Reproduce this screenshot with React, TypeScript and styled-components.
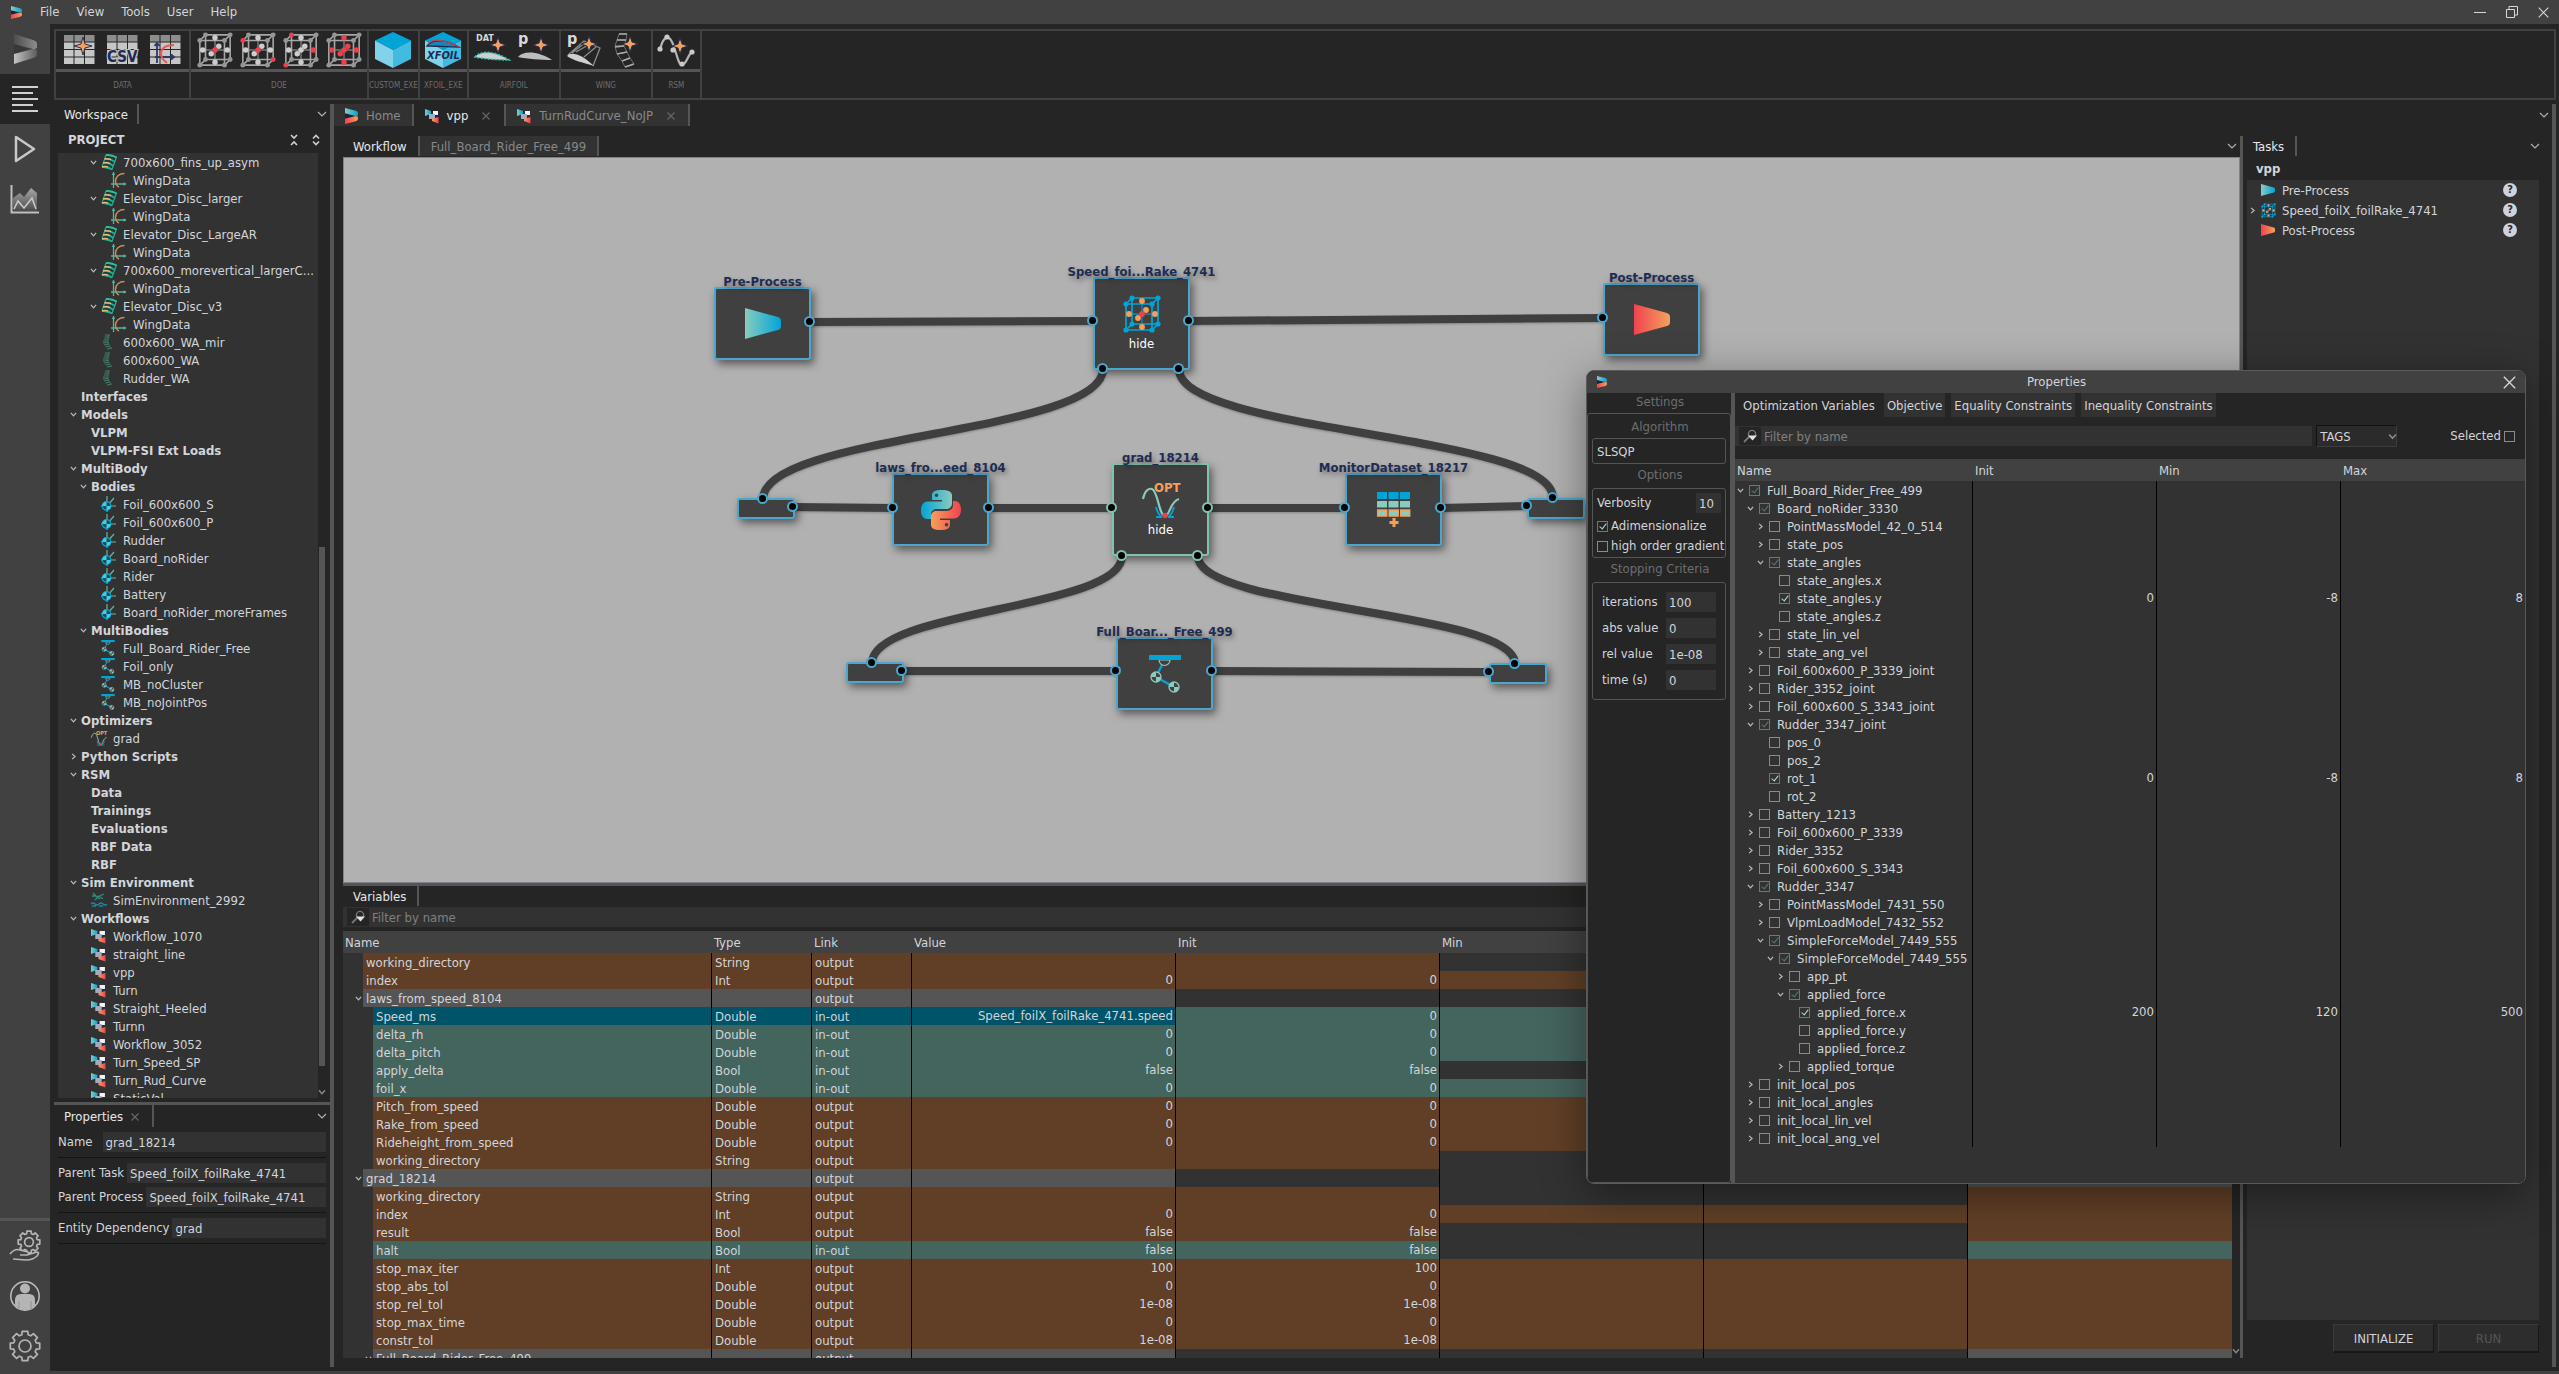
import React from "react";
import styled, { createGlobalStyle, css } from "styled-components";

/* ------------------------------------------------------------------ theme */

const c = {
  bg: "#252525",
  panel: "#323232",
  bar: "#414141",
  line: "#555555",
  text: "#d2d5da",
  dim: "#87898c",
  faint: "#6e6e6e",
  teal: "#44645e",
  brown: "#603f26",
  blue: "#005469",
  cyan: "#00a5d8",
  mint: "#8bcbbd",
  red: "#f04350",
  orange: "#f5a05a",
  navy: "#1e2c54",
};

const GlobalStyle = createGlobalStyle`
  *, *::before, *::after { box-sizing: border-box; }
  body { margin: 0; background: ${c.bg}; overflow: hidden; }
  body, button, input, select, table {
    font-family: "DejaVu Sans Condensed", "Noto Sans", sans-serif;
    font-size: 13px;
    line-height: 18px;
    color: ${c.text};
  }
  button { background: none; border: 0; padding: 0; }
  h1, h2, ul { margin: 0; padding: 0; list-style: none; font-size: 13px; }
  svg { display: block; flex: none; overflow: visible; }
`;

/* ------------------------------------------------------------------ icons */

const DefsSvg = styled.svg`
  position: absolute;
`;

const Defs = () => (
  <DefsSvg width="0" height="0" aria-hidden="true">
    <defs>
      <linearGradient id="gCool"><stop offset="0" stopColor={c.mint} /><stop offset="1" stopColor={c.cyan} /></linearGradient>
      <linearGradient id="gWarm"><stop offset="0" stopColor={c.red} /><stop offset="1" stopColor={c.orange} /></linearGradient>
      <linearGradient id="gCoolR"><stop offset="0" stopColor={c.cyan} /><stop offset="1" stopColor={c.mint} /></linearGradient>
      <linearGradient id="gWarmR"><stop offset="0" stopColor={c.orange} /><stop offset="1" stopColor={c.red} /></linearGradient>
      <linearGradient id="gGray"><stop offset="0" stopColor="#4d4d4d" /><stop offset="1" stopColor="#8d8d8d" /></linearGradient>
      <linearGradient id="gGrayR"><stop offset="0" stopColor="#c4c4c4" /><stop offset="1" stopColor="#5c5c5c" /></linearGradient>
      <linearGradient id="gArea" x2="0" y2="1"><stop offset="0" stopColor="#a8a8a8" /><stop offset="1" stopColor="#4a4a4a" /></linearGradient>
    </defs>
  </DefsSvg>
);

const Logo = ({ w = 12, h = 14 }: { w?: number; h?: number }) => (
  <svg width={w} height={h} viewBox="0 0 12 14" preserveAspectRatio="none">
    <path d="M0 4.5L8 7L0 9.5Z" fill="#17214a" />
    <path d="M0 0L10 2.4Q12 3 12 4.6V5.6Q12 7 10 7L0 4.6Z" fill="url(#gCool)" />
    <path d="M0 14L10 11.6Q12 11 12 9.4V8.4Q12 7 10 7L0 9.4Z" fill="url(#gWarm)" />
  </svg>
);

const RailLogo = () => (
  <svg width="23" height="30" viewBox="0 0 23 30">
    <path d="M0 10L14 15L0 20Z" fill="#383838" />
    <path d="M0 0L19 6Q23 7 23 10V13Q23 15 19 15L0 10Z" fill="url(#gGray)" />
    <path d="M0 30L19 24Q23 23 23 20V17Q23 15 19 15L0 20Z" fill="url(#gGrayR)" />
  </svg>
);

const Chevron = ({ open = true, size = 7, color = "#b8bbc0" }: { open?: boolean; size?: number; color?: string }) => (
  <svg width={size} height={size} viewBox="0 0 8 8" fill="none" stroke={color} strokeWidth="1.4">
    <path d={open ? "M1 2.2L4 5.6L7 2.2" : "M2.4 1L5.8 4L2.4 7"} />
  </svg>
);

const DockChevron = () => (
  <svg width="10" height="6" viewBox="0 0 10 6" fill="none" stroke="#b0b0b0" strokeWidth="1.2">
    <path d="M1 1L5 5L9 1" />
  </svg>
);

const Cross = ({ size = 8, color = "#666" }: { size?: number; color?: string }) => (
  <svg width={size} height={size} viewBox="0 0 8 8" stroke={color} strokeWidth={size > 10 ? 0.8 : 1.2}>
    <path d="M.5 .5L7.5 7.5M7.5 .5L.5 7.5" />
  </svg>
);

const FunnelGlass = () => (
  <svg width="16" height="14" viewBox="0 0 16 14">
    <circle cx="10" cy="5" r="3.6" fill="none" stroke="#777" strokeWidth="1.4" />
    <path d="M7.5 7.5L2 13" stroke="#777" strokeWidth="1.8" />
    <path d="M6 6.5H15L10.5 11.5Z" fill="#dfe2ea" />
  </svg>
);

const Wedge = ({ w, h, warm }: { w: number; h: number; warm?: boolean }) => (
  <svg width={w} height={h} viewBox="0 0 36 31" preserveAspectRatio="none">
    <path d="M0 0L33 9Q36 10 36 13V18Q36 21 33 22L0 31Z" fill={warm ? "url(#gWarm)" : "url(#gCool)"} />
  </svg>
);

type CubeProps = { w?: number; h?: number; line?: string; corner?: string; face?: string; red?: number[] };
const corners = [[9, 3], [35, 3], [35, 29], [9, 29], [3, 9], [29, 9], [29, 35], [3, 35]];
const faces = [[19, 6], [6, 19], [32, 19], [19, 32], [23, 15], [15, 23], [19, 19]];
/* Dots 0-7 are the corners of the cube, 8-13 its faces and 14 its centre. */
const Cube = ({ w = 38, h = 38, line = c.cyan, corner = c.cyan, face = c.orange, red = [14] }: CubeProps) => (
  <svg width={w} height={h} viewBox="0 0 38 38" preserveAspectRatio="none">
    <g stroke={line} strokeWidth="1.7" fill="none">
      <path d="M9 3H35V29H9ZM3 9H29V35H3ZM3 9L9 3M29 9L35 3M29 35L35 29M3 35L9 29" />
      <path d="M19 6V32M6 19H32M15 23L23 15" strokeWidth="1" />
    </g>
    {[...corners, ...faces].map(([x, y], i) => (
      <circle key={i} cx={x} cy={y} r={i > 7 ? 2.9 : 2.6} fill={red.includes(i) ? "#ee3f4b" : i > 7 ? face : corner} />
    ))}
  </svg>
);

const Python = () => (
  <svg width="40" height="40" viewBox="0 0 40 40">
    <path fillRule="evenodd" fill="url(#gCoolR)" d="M20.5 0C14 0 11 1.5 11 5.5V10H21V11.5H7C2.5 11.5 0 15 0 20.5C0 26 2.5 29 6.5 29H10V24.5C10 21 12.5 19 16 19H25.5C28.5 19 31 16.5 31 13.5V5.5C31 1.5 27 0 20.5 0ZM15.5 3.5A1.8 1.8 0 1 1 15.5 7.1A1.8 1.8 0 1 1 15.5 3.5Z" />
    <path fillRule="evenodd" fill="url(#gWarmR)" d="M19.5 40C26 40 29 38.5 29 34.5V30H19V28.5H33C37.5 28.5 40 25 40 19.5C40 14 37.5 11 33.5 11H32V15.5C32 19 29 21 25.5 21H15.5C12.5 21 10 23 10 26.5V34.5C10 38.5 13 40 19.5 40ZM25.5 36.5A1.8 1.8 0 1 1 25.5 32.9A1.8 1.8 0 1 1 25.5 36.5Z" />
  </svg>
);

const Opt = ({ w = 38, h = 38 }: { w?: number; h?: number }) => (
  <svg width={w} height={h} viewBox="0 0 38 38" fill="none">
    <path d="M1 18C3 9 7 7 10 8C16 10 17 35 23 35C28 35 28 20 37 18" stroke={c.mint} strokeWidth="2.2" />
    <path d="M14 26Q16 34 20 36M32 26Q30 34 26 36M14 36H20M26 36H32" stroke={c.cyan} strokeWidth="1.8" />
    <circle cx="23" cy="34.5" r="2.8" fill="#ee3f4b" />
    <text x="12" y="11" fill={c.orange} fontSize="13" fontWeight="700" fontFamily='"DejaVu Sans Condensed", "Noto Sans", sans-serif'>OPT</text>
  </svg>
);

const DataGrid = () => (
  <svg width="34" height="36" viewBox="0 0 34 36">
    {[0, 1, 2].map((i) => (
      <g key={i}>
        <rect x={i * 11.5} y="0" width="10" height="7" fill={c.cyan} />
        <rect x={i * 11.5} y="9" width="10" height="6.5" fill={c.mint} />
        <rect x={i * 11.5 + 0.7} y="18" width="9" height="6" fill={c.mint} stroke={c.orange} strokeWidth="1.5" />
      </g>
    ))}
    <path d="M17 26V35M12.5 30.5H21.5" stroke={c.orange} strokeWidth="3" />
  </svg>
);

const Mass = ({ x, y, r = 5 }: { x: number; y: number; r?: number }) => (
  <g>
    <circle cx={x} cy={y} r={r} fill="#414141" stroke={c.mint} strokeWidth="1.3" />
    <path d={`M${x} ${y}V${y - r}A${r} ${r} 0 0 0 ${x - r} ${y}ZM${x} ${y}V${y + r}A${r} ${r} 0 0 0 ${x + r} ${y}Z`} fill={c.mint} />
  </g>
);

const Pendulum = ({ w = 32, h = 38 }: { w?: number; h?: number }) => (
  <svg width={w} height={h} viewBox="0 0 32 38">
    <path d="M14 8L7 22L25 32" stroke={c.cyan} strokeWidth="2.4" fill="none" />
    <path d="M10 5A5.5 5.5 0 0 0 21 5Z" fill="#414141" stroke={c.mint} strokeWidth="1.2" />
    <rect width="32" height="5" fill={c.cyan} />
    <Mass x={7} y={22} />
    <Mass x={25} y={32} />
  </svg>
);

const WingIcon = () => (
  <svg width="16" height="16" viewBox="0 0 16 16" fill="none">
    <path d="M5 1L1 13M15.5 3L11 15.5M5 1L15.5 3M1 13L11 15.5" stroke="#1fae8e" strokeWidth="1.2" />
    <path d="M5 1Q10 0 15.5 3.5" stroke="#2bc0a0" strokeWidth="1.8" />
    <path d="M3.5 5Q9 4 14 8M2 9Q8 8 12.5 12M1 13Q6 11.5 11 15.5" stroke="#1fae8e" strokeWidth="1.8" />
    <path d="M3.5 5Q7 4.2 10 5.6M2 9Q6 8 9 9.6M1 13Q4 12 7 13" stroke="#e0b878" strokeWidth="1.5" />
  </svg>
);

const CurveIcon = () => (
  <svg width="16" height="16" viewBox="0 0 16 16" fill="none">
    <path d="M2.5 0V16M0 12H15" stroke="#56b59c" strokeWidth="1.3" />
    <path d="M.8 3L2.5 0L4.2 3ZM12.5 10.2L15.5 12L12.5 13.8Z" fill="#56b59c" />
    <path d="M13.5 1.5C8 1.5 4.500 5 4.500 9C4.500 12 6 14 8 15" stroke="#c98a55" strokeWidth="1.5" />
  </svg>
);

const RibsIcon = () => (
  <svg width="16" height="16" viewBox="0 0 16 16" stroke="#3f8068" strokeWidth="1.2" fill="none">
    <path d="M4 1H9M3.5 3H8.5M3 5H7.5M2 7H7M2 9L7 8.5M3 11L8 10M4.500 13L9 12M6 15L11 14" />
    <path d="M7.5 1L7 7L7.5 10L10 14" strokeWidth="0.7" />
  </svg>
);

const BodyIcon = () => (
  <svg width="16" height="16" viewBox="0 0 16 16">
    <path d="M6 0V16M0 10H15M6 10L13 2" stroke="#5cb8a4" strokeWidth="1.2" />
    <circle cx="5.5" cy="10" r="4.3" fill="#244a55" stroke={c.cyan} strokeWidth="1.2" />
    <path d="M5.5 10V5.7A4.3 4.3 0 0 0 1.2 10ZM5.5 10V14.3A4.3 4.3 0 0 0 9.8 10Z" fill="#3fd0e6" />
  </svg>
);

const SimIcon = () => (
  <svg width="16" height="16" viewBox="0 0 16 16" fill="none" strokeWidth="1.3">
    <path d="M2 1L6 5L13 2M4 8L8 4L12 7M6 5L9 7M1 4L5 4" stroke="#2e8f7d" />
    <path d="M0 12Q2 10 4 12T8 12T12 12T16 12M1 14H5M8 14H12" stroke="#1d86a5" />
  </svg>
);

const FlowIcon = ({ w = 16 }: { w?: number }) => (
  <svg width={w} height="16" viewBox="1 0 14 16" preserveAspectRatio="none">
    <path d="M3 3L11 9L13 13" stroke="#20294f" strokeWidth="3" fill="none" />
    <path d="M1 1L7 3V6L1 8Z" fill="url(#gCool)" />
    <rect x="9" y="3" width="5" height="4" fill="#f2f4f8" />
    <rect x="5" y="6" width="6" height="5" fill="#a6aabd" />
    <path d="M14.5 9L8 11V13L14.5 15.5Z" fill="url(#gWarmR)" />
  </svg>
);

const Star = ({ x, y, r = 8 }: { x: number; y: number; r?: number }) => (
  <path
    d={`M${x} ${y - r}L${x + 2} ${y - 2}L${x + r} ${y}L${x + 2} ${y + 2}L${x} ${y + r}L${x - 2} ${y + 2}L${x - r} ${y}L${x - 2} ${y - 2}Z`}
    fill={c.orange}
    stroke="#2a2f52"
    strokeWidth="1"
  />
);

const SheetBase = () => (
  <g>
    {[0, 1, 2, 3].map((row) =>
      [0, 1, 2].map((col) => (
        <rect key={`${row}${col}`} x={col * 10.5} y={row * 7.5} width="9.5" height="6.5" fill={row ? "#c6c6c6" : "#8d8d8d"} />
      ))
    )}
  </g>
);

const iconFont = '"DejaVu Sans Condensed", "Noto Sans", sans-serif';

const toolIcons: Record<string, React.ReactNode> = {
  star: <svg width="31" height="30" viewBox="0 0 31 30"><SheetBase /><Star x={19} y={11} r={9} /></svg>,
  csv: (
    <svg width="31" height="30" viewBox="0 0 31 30"><SheetBase />
      <text x="0" y="27" fontSize="15" fontWeight="700" fill={c.navy} fontFamily={iconFont} stroke="#c6c6c6" strokeWidth="2" paintOrder="stroke">CSV</text>
    </svg>
  ),
  curve: (
    <svg width="31" height="30" viewBox="0 0 31 30"><SheetBase />
      <path d="M7 28V9M5 22H24M4.5 11L7 8L9.5 11M21 19.5L24 22L21 24.5" stroke="#2b3a63" strokeWidth="1.8" fill="none" />
      <path d="M24 10C15 10 11 14 11 19C11 23 13 25 17 28" stroke="#f0554f" strokeWidth="2" fill="none" />
    </svg>
  ),
  box: (
    <svg width="36" height="36" viewBox="0 0 36 36">
      <path d="M18 0L36 8.5L18 18L0 8.5Z" fill="#00a5d8" />
      <path d="M0 8.5L18 18V36L0 27Z" fill="#80d3ea" />
      <path d="M36 8.5L18 18V36L36 27Z" fill="#40bce1" />
    </svg>
  ),
  xfoil: (
    <svg width="36" height="36" viewBox="0 0 36 36">
      <path d="M18 0L36 8.5L18 18L0 8.5Z" fill="#00a5d8" />
      <path d="M0 8.5L18 18V36L0 27Z" fill="#80d3ea" />
      <path d="M36 8.5L18 18V36L36 27Z" fill="#40bce1" />
      <path d="M2 14C8 6 22 8 34 15C24 15 10 14 2 14Z" fill="#1688b8" stroke={c.navy} strokeWidth="1.3" />
      <path d="M3 12C8 6 20 8 34 15" fill="none" stroke="#d24050" strokeWidth="1.3" />
      <text x="2" y="27" fontSize="11" fontWeight="700" fontStyle="italic" fill={c.navy} fontFamily={iconFont}>XFOIL</text>
    </svg>
  ),
  dat: (
    <svg width="36" height="36" viewBox="0 0 36 36">
      <text x="2" y="9" fontSize="9" fontWeight="700" fill="#d9d9d9" fontFamily={iconFont}>DAT</text>
      <Star x={24} y={13} />
      <path d="M1 25C6 18 22 19 35 28C24 28 10 27 1 25Z" fill="#cfcfcf" stroke="#2fc4b0" strokeWidth="1.6" strokeDasharray="2 1.5" />
    </svg>
  ),
  pfoil: (
    <svg width="36" height="36" viewBox="0 0 36 36">
      <text x="1" y="12" fontSize="16" fontWeight="700" fill="#d9d9d9" fontFamily={iconFont}>p</text>
      <Star x={24} y={13} />
      <path d="M1 25C6 18 22 19 35 28C24 28 10 27 1 25Z" fill="#bdbdbd" />
    </svg>
  ),
  pwing: (
    <svg width="36" height="36" viewBox="0 0 36 36">
      <text x="1" y="12" fontSize="16" fontWeight="700" fill="#d9d9d9" fontFamily={iconFont}>p</text>
      <path d="M2 23L18 9L34 16L27 34M10 20L24 12M18 25L30 15M6 21L20 10" stroke="#8c8c8c" strokeWidth="1.3" fill="none" />
      <path d="M1 24C5 19 16 22 28 34C18 31 6 28 1 24Z" fill="#cfcfcf" />
      <Star x={23} y={12} />
    </svg>
  ),
  ribs: (
    <svg width="36" height="36" viewBox="0 0 36 36">
      <path d="M10 2H18L17 8H8ZM8 8H17L15 14H6ZM6 14H15L18 20L8 22ZM8 22L18 20L21 26L13 29ZM13 29L21 26L25 32L16 35Z" stroke="#6f6f6f" strokeWidth="1" fill="none" />
      <path d="M10 2H18M8 8H17M6 15L15 14M8 22L18 20M13 29L21 26M16 35L25 32" stroke="#a8a8a8" strokeWidth="1.6" />
      <Star x={21} y={12} />
    </svg>
  ),
  rsm: (
    <svg width="36" height="36" viewBox="0 0 36 36" fill="none">
      <path d="M2 18C4 8 8 4 11 6C17 9 19 33 24 33C29 32 30 22 34 20" stroke="#b5b5b5" strokeWidth="2.2" />
      {[[2, 17], [9, 5], [15, 18], [24, 32], [34, 20]].map(([x, y]) => <circle key={x} cx={x} cy={y} r="2.6" fill="#c9c9c9" />)}
      <Star x={22} y={14} />
    </svg>
  ),
};

const doeVariants = [[14], [4, 14, 2], [0, 7, 10], [8, 9, 10, 11, 12, 13, 14]];
doeVariants.forEach((red, i) => {
  toolIcons[`doe${i}`] = <Cube w={36} h={36} line="#a6a6a6" corner="#969696" face="#cdcdcd" red={red} />;
});

const Gear = ({ r = 15, cx = 15, cy = 15 }: { r?: number; cx?: number; cy?: number }) => {
  const pts: string[] = [];
  for (let i = 0; i < 8; i++) {
    [[-0.28, 0.78], [-0.19, 1], [0.19, 1], [0.28, 0.78]].forEach(([da, k]) => {
      const a = (i * Math.PI) / 4 + da;
      pts.push(`${(cx + Math.sin(a) * r * k).toFixed(1)} ${(cy - Math.cos(a) * r * k).toFixed(1)}`);
    });
  }
  return (
    <g fill="none" stroke="#b5b5b5" strokeWidth="1.7" strokeLinejoin="round">
      <path d={`M${pts.join("L")}Z`} />
      <circle cx={cx} cy={cy} r={r * 0.4} />
    </g>
  );
};

/* --------------------------------------------------------------- app frame */

const Shell = styled.div`
  display: flex;
  flex-direction: column;
  height: 100vh;
  position: relative;
  overflow: hidden;
  background: ${c.bg};
  white-space: nowrap;
`;

const TitleBar = styled.header`
  display: flex;
  align-items: center;
  height: 24px;
  padding: 0 10px 0 11px;
  background: ${c.bar};
`;

const Menu = styled.nav`
  display: flex;
  gap: 17px;
  margin-left: 18px;
  flex: 1;
`;

const WindowButtons = styled.div`
  display: flex;
  align-items: center;
  gap: 20px;
`;

const Workbench = styled.div`
  display: flex;
  flex: 1;
  min-height: 0;
  border-bottom: 3px solid ${c.bar};
`;

const Rail = styled.nav`
  display: flex;
  flex-direction: column;
  width: 50px;
  background: ${c.bar};
`;

const RailButton = styled.button<{ $active?: boolean }>`
  display: flex;
  align-items: center;
  justify-content: center;
  height: 50px;
  background: ${(p) => (p.$active ? c.bg : "transparent")};
`;

const RailFoot = styled.div`
  display: flex;
  flex-direction: column;
  margin-top: auto;
  border-top: 3px solid ${c.line};
`;

const Stage = styled.div`
  display: flex;
  flex-direction: column;
  flex: 1;
  min-width: 0;
`;

const ToolBar = styled.div`
  display: flex;
  margin: 5px 3px 4px 4px;
  border: 2px solid ${c.bar};
`;

const ToolGroup = styled.section`
  display: flex;
  flex-direction: column;
  border-right: 2px solid ${c.bar};
`;

const ToolRow = styled.div`
  display: flex;
  justify-content: center;
  height: 38px;
  padding: 0 2px;
`;

const ToolButton = styled.button`
  display: flex;
  align-items: center;
  justify-content: center;
  width: 43px;
`;

const ToolLabel = styled.h2`
  height: 29px;
  border-top: 3px solid ${c.line};
  color: ${c.faint};
  font-size: 8px;
  line-height: 28px;
  font-weight: 400;
  text-align: center;
`;

const Docks = styled.div`
  display: flex;
  flex: 1;
  min-height: 0;
  padding-right: 3px;
`;

const Splitter = styled.div<{ $size?: number }>`
  flex: none;
  width: ${(p) => (p.$size ? `${p.$size}px` : "auto")};
  height: ${(p) => (p.$size ? "auto" : "3px")};
  background: ${c.line};
`;

const EndSplitter = styled(Splitter)`
  margin-bottom: 4px;
`;

/* ------------------------------------------------------------------- tabs */

const TabBar = styled.div<{ $h?: number; $end?: number }>`
  display: flex;
  flex: none;
  height: ${(p) => p.$h ?? 20}px;
  padding-right: ${(p) => p.$end ?? 3}px;
`;

const Tab = styled.button<{ $active?: boolean; $edge?: "left" | "right" | "both"; $l?: number; $r?: number }>`
  display: flex;
  align-items: center;
  gap: 8px;
  padding: 2px ${(p) => p.$r ?? 11}px 0 ${(p) => p.$l ?? 11}px;
  background: ${(p) => (p.$active ? "transparent" : c.panel)};
  color: ${(p) => (p.$active ? "#e6e8ec" : c.dim)};
  ${(p) => (p.$edge === "left" || p.$edge === "both") && css`border-left: 2px solid ${c.line};`}
  ${(p) => (p.$edge === "right" || p.$edge === "both") && css`border-right: 2px solid ${c.line};`}
`;

const TabClose = styled.span<{ $lead?: number }>`
  display: flex;
  padding: 0 7px 0 ${(p) => p.$lead ?? 6}px;
`;

const BarEnd = styled.button`
  display: flex;
  align-items: center;
  margin-left: auto;
`;

/* -------------------------------------------------------------- left dock */

const LeftDock = styled.aside`
  display: flex;
  flex-direction: column;
  flex: none;
  width: 280px;
  padding-left: 4px;
`;

const ProjectHead = styled.div`
  display: flex;
  align-items: center;
  gap: 14px;
  height: 29px;
  padding: 2px 10px 0 14px;
`;

const ProjectTitle = styled.h1`
  flex: 1;
  font-weight: 700;
`;

const TreeFrame = styled.div`
  display: flex;
  flex: 1;
  min-height: 0;
  margin: 0 5px 4px 4px;
`;

const Tree = styled.ul`
  flex: 1;
  overflow: hidden;
  background: ${c.panel};
`;

const TreeItem = styled.li<{ $depth: number; $bold?: boolean }>`
  display: flex;
  align-items: center;
  height: 18px;
  padding-left: ${(p) => 7 + p.$depth * 10}px;
  font-weight: ${(p) => (p.$bold ? 700 : 400)};
`;

const TreeText = styled.span`
  padding-top: 2px;
`;

const Twisty = styled.button<{ $w?: number }>`
  display: flex;
  align-items: center;
  justify-content: center;
  flex: none;
  width: ${(p) => p.$w ?? 16}px;
  height: 18px;
`;

const TreeIcon = styled.span`
  flex: none;
  width: 22px;
`;

const TreeScroll = styled.div`
  display: flex;
  flex-direction: column;
  align-items: center;
  justify-content: flex-end;
  gap: 22px;
  width: 7px;
  padding-bottom: 2px;
`;

const TreeThumb = styled.div`
  width: 6px;
  height: 55%;
  background: ${c.line};
`;

const PropDock = styled.section`
  flex: none;
  height: 266px;
`;

const PropForm = styled.form`
  padding: 5px 4px 0 4px;
`;

const PropBlock = styled.div`
  display: flex;
  flex-direction: column;
  gap: 4px;
  margin-bottom: 5px;
  padding-bottom: 5px;
  border-bottom: 1px solid #141414;
`;

const PropField = styled.label<{ $gap?: number }>`
  display: flex;
  align-items: center;
  gap: ${(p) => p.$gap ?? 3}px;
`;

const TextBox = styled.input<{ $w?: number }>`
  ${(p) => (p.$w ? css`width: ${p.$w}px;` : css`flex: 1; min-width: 0;`)}
  height: 20px;
  padding: 1px 3px 0;
  border: 0;
  background: ${c.panel};
`;

/* ------------------------------------------------------------ center dock */

const CenterDock = styled.main`
  display: flex;
  flex-direction: column;
  flex: 1;
  min-width: 0;
`;

const WorkArea = styled.div`
  display: flex;
  flex: 1;
  min-height: 0;
  margin: 10px 0 13px;
  padding-left: 9px;
`;

const FlowColumn = styled.div`
  display: flex;
  flex-direction: column;
  flex: 1;
  min-width: 0;
`;

const Canvas = styled.div`
  position: relative;
  flex: 1;
  margin-top: 1px;
  overflow: hidden;
  border: 1px solid #80818a;
  background: #b1b1b1;
`;

const Edges = styled.svg`
  position: absolute;
  left: 0;
  top: 0;
  filter: drop-shadow(0 1px 1px rgba(0, 0, 0, 0.25));
`;

const NodeBox = styled.div<{ $x: number; $y: number; $w: number; $h: number; $on?: boolean }>`
  position: absolute;
  left: ${(p) => p.$x}px;
  top: ${(p) => p.$y}px;
  display: flex;
  flex-direction: column;
  align-items: center;
  justify-content: center;
  gap: 2px;
  width: ${(p) => p.$w}px;
  height: ${(p) => p.$h}px;
  border: 2px solid ${(p) => (p.$on ? "#7fc2ad" : "#4ba6cc")};
  border-radius: 3px;
  background: #404040;
  box-shadow: 3px 4px 8px rgba(0, 0, 0, 0.5);
`;

const NodeLabel = styled.div`
  position: absolute;
  left: 50%;
  top: -16px;
  transform: translateX(-50%);
  color: ${c.navy};
  font-weight: 700;
  text-shadow: 2px 3px 5px rgba(0, 0, 0, 0.35);
`;

const HideButton = styled.button`
  color: #ffffff;
`;

const Port = styled.span<{ $x: number; $y: number; $on?: boolean }>`
  position: absolute;
  left: ${(p) => p.$x - 6}px;
  top: ${(p) => p.$y - 6}px;
  width: 11px;
  height: 11px;
  border: 2px solid ${(p) => (p.$on ? "#7fc2ad" : "#4ba6cc")};
  border-radius: 50%;
  background: #000000;
`;

const VarDock = styled.section`
  display: flex;
  flex-direction: column;
  flex: none;
  height: 472px;
`;

const FilterBox = styled.label`
  display: flex;
  align-items: center;
  flex: 1;
  height: 20px;
  padding-left: 4px;
  background: ${c.panel};
`;

const FilterIcon = styled.span`
  display: flex;
  align-items: center;
  justify-content: center;
  width: 22px;
  height: 18px;
  background: ${c.bg};
`;

const FilterInput = styled.input`
  flex: 1;
  min-width: 0;
  padding: 2px 3px 0;
  border: 0;
  background: transparent;
  &::placeholder { color: #808080; opacity: 1; }
`;

const VarFilter = styled.div`
  display: flex;
  flex: none;
  margin: 1px 0 4px;
`;

const VarScroll = styled.div`
  display: flex;
  flex: 1;
  min-height: 0;
  overflow: hidden;
`;

const VarPane = styled.div`
  flex: 1;
  min-width: 0;
  overflow: hidden;
  background: ${c.panel};
`;

const VarScrollBar = styled.div`
  display: flex;
  align-items: flex-end;
  justify-content: center;
  width: 8px;
  padding-bottom: 3px;
`;

const Grid = styled.table`
  width: 100%;
  table-layout: fixed;
  border-collapse: separate;
  border-spacing: 0;
`;

const Col = styled.col<{ $w?: number }>`
  width: ${(p) => (p.$w ? `${p.$w}px` : "auto")};
`;

const Th = styled.th`
  height: 22px;
  padding: 2px 2px 0;
  background: ${c.bar};
  font-weight: 400;
  text-align: left;
`;

const Td = styled.td<{ $bg?: string; $num?: boolean }>`
  height: 18px;
  padding: ${(p) => (p.$num ? "0 2px" : "2px 3px 0")};
  overflow: hidden;
  border-right: 1px solid #000000;
  background: ${(p) => p.$bg ?? "transparent"};
  line-height: ${(p) => (p.$num ? 18 : 16)}px;
  text-align: ${(p) => (p.$num ? "right" : "left")};
  &:last-child { border-right: 0; }
`;

const NameTd = styled(Td)`
  padding: 0;
`;

const NameCell = styled.div<{ $depth: number }>`
  display: flex;
  padding-left: ${(p) => 10 + p.$depth * 10}px;
`;

const NameFill = styled.span<{ $bg: string }>`
  flex: 1;
  height: 18px;
  padding: 2px 0 0 3px;
  background: ${(p) => p.$bg};
`;

/* ------------------------------------------------------------- tasks dock */

const TaskDock = styled.aside`
  display: flex;
  flex-direction: column;
  flex: none;
  width: 309px;
`;

const TaskTitle = styled.h1`
  padding: 4px 13px 0;
  height: 24px;
  font-weight: 700;
`;

const TaskList = styled.ul`
  flex: 1;
  margin: 0 13px 4px 4px;
  background: ${c.panel};
`;

const TaskItem = styled.li`
  display: flex;
  align-items: center;
  height: 20px;
  padding-right: 22px;
`;

const TaskIcon = styled.span`
  width: 25px;
  padding-left: 4px;
`;

const TaskName = styled.span`
  flex: 1;
  padding-top: 2px;
`;

const HelpDot = styled.button`
  width: 14px;
  height: 14px;
  border-radius: 50%;
  background: #cfd2dc;
  color: #2a2a2a;
  font-size: 11px;
  line-height: 14px;
  font-weight: 700;
`;

const TaskActions = styled.div`
  display: flex;
  justify-content: flex-end;
  gap: 4px;
  padding: 0 13px 5px 0;
`;

const ActionButton = styled.button`
  width: 101px;
  height: 29px;
  padding-top: 2px;
  border: 1px solid #3a3a3a;
  border-right-color: #171717;
  border-bottom: 2px solid #171717;
  background: #2d2d2d;
  &:disabled { color: #555555; }
`;

/* ----------------------------------------------------------------- dialog */

const Dialog = styled.section`
  position: absolute;
  top: 370px;
  right: 33px;
  width: 940px;
  overflow: hidden;
  border: 1px solid #5a5a5a;
  border-radius: 8px;
  background: ${c.bg};
  box-shadow: 0 10px 44px rgba(0, 0, 0, 0.42);
`;

const DialogBar = styled.header`
  display: grid;
  grid-template-columns: 1fr auto 1fr;
  align-items: center;
  height: 22px;
  padding: 0 9px 0 10px;
  background: ${c.bar};
`;

const DialogTitle = styled.h1`
  font-weight: 400;
`;

const DialogClose = styled.button`
  justify-self: end;
`;

const DialogBody = styled.div`
  display: flex;
`;

const Settings = styled.form`
  display: flex;
  flex-direction: column;
  width: 144px;
`;

const GroupTitle = styled.h2<{ $h: number }>`
  height: ${(p) => p.$h}px;
  padding-left: 2px;
  color: ${c.faint};
  font-weight: 400;
  line-height: ${(p) => p.$h - 2}px;
  text-align: center;
`;

const SettingsFrame = styled.div`
  flex: 1;
  padding: 3px 4px;
  border: 1px solid ${c.line};
  border-radius: 3px;
`;

const Group = styled.div<{ $pad?: string; $gap?: number }>`
  display: flex;
  flex-direction: column;
  gap: ${(p) => p.$gap ?? 0}px;
  padding: ${(p) => p.$pad ?? "4px 4px 1px"};
  border: 1px solid ${c.line};
  border-radius: 3px;
`;

const AlgoSelect = styled.select`
  width: 100%;
  height: 26px;
  padding: 1px 4px 0;
  appearance: none;
  border: 1px solid ${c.line};
  border-radius: 3px;
  background: ${c.bg};
`;

const FieldRow = styled.label`
  display: flex;
  align-items: center;
  justify-content: space-between;
`;

const CheckRow = styled.label`
  display: flex;
  align-items: center;
  gap: 3px;
  height: 20px;
  ${FieldRow} + & { margin-top: 3px; }
`;

const Check = styled.input.attrs({ type: "checkbox" })<{ $partial?: boolean }>`
  position: relative;
  flex: none;
  width: 11px;
  height: 11px;
  margin: 0;
  appearance: none;
  border: 1px solid #8a8a8a;
  &:checked { border-color: #3f87a0; }
  &:checked::after {
    content: "";
    position: absolute;
    left: 3px;
    top: 0;
    width: 4px;
    height: 7px;
    border: solid ${(p) => (p.$partial ? "#4f7a76" : "#a9dccf")};
    border-width: 0 1px 1px 0;
    transform: rotate(38deg);
  }
`;

const DialogMain = styled.div`
  flex: 1;
  min-width: 0;
`;

const DialogTabs = styled.div`
  display: flex;
  gap: 6px;
  padding-left: 5px;
`;

const DialogTab = styled.button<{ $active?: boolean }>`
  height: 24px;
  padding: 2px 3px 0;
  background: ${(p) => (p.$active ? "transparent" : c.panel)};
`;

const DialogFilter = styled.div`
  display: flex;
  align-items: center;
  padding: 8px 10px 12px 0;
`;

const TagBox = styled.div`
  display: grid;
  align-items: center;
  margin: 0 53px 0 4px;
  > * { grid-area: 1 / 1; }
`;

const TagSelect = styled.select`
  width: 81px;
  height: 22px;
  padding: 1px 3px 0;
  appearance: none;
  border: 1px solid #3c3c3c;
  border-top-color: #111111;
  border-left-color: #111111;
  background: #2b2b2b;
`;

const TagArrow = styled.span`
  justify-self: end;
  pointer-events: none;
`;

const VarTree = styled.div`
  padding-bottom: 36px;
  background: ${c.panel};
`;

const CheckCell = styled.div<{ $depth: number }>`
  display: flex;
  align-items: center;
  gap: 3px;
  height: 18px;
  padding-left: ${(p) => p.$depth * 10}px;
`;

const CheckName = styled.label`
  padding: 2px 0 0 4px;
`;

/* -------------------------------------------------------------------- data */

const toolGroups = [
  { name: "DATA", tools: ["star", "csv", "curve"] },
  { name: "DOE", tools: ["doe0", "doe1", "doe2", "doe3"] },
  { name: "CUSTOM_EXE", tools: ["box"] },
  { name: "XFOIL_EXE", tools: ["xfoil"] },
  { name: "AIRFOIL", tools: ["dat", "pfoil"] },
  { name: "WING", tools: ["pwing", "ribs"] },
  { name: "RSM", tools: ["rsm"] },
];

const treeIcons: Record<string, React.ReactNode> = {
  wing: <WingIcon />,
  curve: <CurveIcon />,
  ribs: <RibsIcon />,
  body: <BodyIcon />,
  multi: <Pendulum w={14} h={16} />,
  opt: <Opt w={16} h={16} />,
  sim: <SimIcon />,
  flow: <FlowIcon w={15} />,
};

/* [depth, label, icon or "" for a bold heading, "v" open / ">" closed] */
const tree: [number, string, string, string?][] = [
  [2, "700x600_fins_up_asym", "wing", "v"],
  [3, "WingData", "curve"],
  [2, "Elevator_Disc_larger", "wing", "v"],
  [3, "WingData", "curve"],
  [2, "Elevator_Disc_LargeAR", "wing", "v"],
  [3, "WingData", "curve"],
  [2, "700x600_morevertical_largerC...", "wing", "v"],
  [3, "WingData", "curve"],
  [2, "Elevator_Disc_v3", "wing", "v"],
  [3, "WingData", "curve"],
  [2, "600x600_WA_mir", "ribs"],
  [2, "600x600_WA", "ribs"],
  [2, "Rudder_WA", "ribs"],
  [0, "Interfaces", ""],
  [0, "Models", "", "v"],
  [1, "VLPM", ""],
  [1, "VLPM-FSI Ext Loads", ""],
  [0, "MultiBody", "", "v"],
  [1, "Bodies", "", "v"],
  [2, "Foil_600x600_S", "body"],
  [2, "Foil_600x600_P", "body"],
  [2, "Rudder", "body"],
  [2, "Board_noRider", "body"],
  [2, "Rider", "body"],
  [2, "Battery", "body"],
  [2, "Board_noRider_moreFrames", "body"],
  [1, "MultiBodies", "", "v"],
  [2, "Full_Board_Rider_Free", "multi"],
  [2, "Foil_only", "multi"],
  [2, "MB_noCluster", "multi"],
  [2, "MB_noJointPos", "multi"],
  [0, "Optimizers", "", "v"],
  [1, "grad", "opt"],
  [0, "Python Scripts", "", ">"],
  [0, "RSM", "", "v"],
  [1, "Data", ""],
  [1, "Trainings", ""],
  [1, "Evaluations", ""],
  [1, "RBF Data", ""],
  [1, "RBF", ""],
  [0, "Sim Environment", "", "v"],
  [1, "SimEnvironment_2992", "sim"],
  [0, "Workflows", "", "v"],
  [1, "Workflow_1070", "flow"],
  [1, "straight_line", "flow"],
  [1, "vpp", "flow"],
  [1, "Turn", "flow"],
  [1, "Straight_Heeled", "flow"],
  [1, "Turnn", "flow"],
  [1, "Workflow_3052", "flow"],
  [1, "Turn_Speed_SP", "flow"],
  [1, "Turn_Rud_Curve", "flow"],
  [1, "StaticVal", "flow"],
];

type FlowNode = { x: number; y: number; w?: number; h?: number; label?: string; icon?: React.ReactNode; hide?: boolean; on?: boolean };
const nodes: FlowNode[] = [
  { x: 370, y: 129, label: "Pre-Process", icon: <Wedge w={36} h={31} /> },
  { x: 749, y: 119, h: 93, label: "Speed_foi...Rake_4741", icon: <Cube />, hide: true },
  { x: 1259, y: 125, label: "Post-Process", icon: <Wedge w={36} h={31} warm /> },
  { x: 393, y: 340, w: 58, h: 21 },
  { x: 548, y: 315, label: "laws_fro...eed_8104", icon: <Python /> },
  { x: 768, y: 305, h: 93, label: "grad_18214", icon: <Opt />, hide: true, on: true },
  { x: 1001, y: 315, label: "MonitorDataset_18217", icon: <DataGrid /> },
  { x: 1183, y: 340, w: 58, h: 21 },
  { x: 502, y: 504, w: 58, h: 21 },
  { x: 772, y: 479, label: "Full_Boar..._Free_499", icon: <Pendulum /> },
  { x: 1145, y: 505, w: 58, h: 21 },
];

/* [x1, y1, x2, y2, curved] */
const edges: [number, number, number, number, boolean?][] = [
  [466, 164, 749, 163],
  [845, 163, 1259, 160],
  [759, 211, 419, 341, true],
  [835, 211, 1209, 340, true],
  [449, 349, 549, 350],
  [645, 350, 768, 350],
  [864, 350, 1001, 350],
  [1097, 350, 1183, 348],
  [778, 398, 528, 505, true],
  [854, 398, 1171, 506, true],
  [558, 513, 772, 513],
  [868, 513, 1145, 514],
];

/* Ports that belong to the selected grad node. */
const isLit = (x: number, y: number) => [768, 864, 778, 854].includes(x) && y < 400;

const T = c.teal, B = c.brown, G = c.line;
type VarRow = { n: string; t: string; l: string; v?: string; i?: string; bg: string; d: number; mm?: boolean; head?: boolean; sel?: boolean };
const v = (n: string, t: string, l: string, val: string, bg: string, d: number, mm: boolean, init = val): VarRow => ({ n, t, l, v: val, i: init, bg, d, mm });
const vars: VarRow[] = [
  v("working_directory", "String", "output", "", B, 1, false),
  v("index", "Int", "output", "0", B, 1, true),
  { n: "laws_from_speed_8104", t: "", l: "output", bg: G, d: 0, head: true },
  { ...v("Speed_ms", "Double", "in-out", "Speed_foilX_foilRake_4741.speed", T, 2, true, "0"), sel: true },
  v("delta_rh", "Double", "in-out", "0", T, 2, true),
  v("delta_pitch", "Double", "in-out", "0", T, 2, true),
  v("apply_delta", "Bool", "in-out", "false", T, 2, false),
  v("foil_x", "Double", "in-out", "0", T, 2, true),
  v("Pitch_from_speed", "Double", "output", "0", B, 2, true),
  v("Rake_from_speed", "Double", "output", "0", B, 2, true),
  v("Rideheight_from_speed", "Double", "output", "0", B, 2, true),
  v("working_directory", "String", "output", "", B, 2, false),
  { n: "grad_18214", t: "", l: "output", bg: G, d: 0, head: true },
  v("working_directory", "String", "output", "", B, 2, false),
  v("index", "Int", "output", "0", B, 2, true),
  v("result", "Bool", "output", "false", B, 2, false),
  v("halt", "Bool", "in-out", "false", T, 2, false),
  v("stop_max_iter", "Int", "output", "100", B, 2, true),
  v("stop_abs_tol", "Double", "output", "0", B, 2, true),
  v("stop_rel_tol", "Double", "output", "1e-08", B, 2, true),
  v("stop_max_time", "Double", "output", "0", B, 2, true),
  v("constr_tol", "Double", "output", "1e-08", B, 2, true),
  { n: "Full_Board_Rider_Free_499", t: "", l: "output", bg: G, d: 1, head: true },
];

/* [depth, name, twisty, check state, values] */
const optVars: [number, string, "v" | ">" | "", "" | "p" | "x", string[]?][] = [
  [0, "Full_Board_Rider_Free_499", "v", "p"],
  [1, "Board_noRider_3330", "v", "p"],
  [2, "PointMassModel_42_0_514", ">", ""],
  [2, "state_pos", ">", ""],
  [2, "state_angles", "v", "p"],
  [3, "state_angles.x", "", ""],
  [3, "state_angles.y", "", "x", ["0", "-8", "8"]],
  [3, "state_angles.z", "", ""],
  [2, "state_lin_vel", ">", ""],
  [2, "state_ang_vel", ">", ""],
  [1, "Foil_600x600_P_3339_joint", ">", ""],
  [1, "Rider_3352_joint", ">", ""],
  [1, "Foil_600x600_S_3343_joint", ">", ""],
  [1, "Rudder_3347_joint", "v", "p"],
  [2, "pos_0", "", ""],
  [2, "pos_2", "", ""],
  [2, "rot_1", "", "x", ["0", "-8", "8"]],
  [2, "rot_2", "", ""],
  [1, "Battery_1213", ">", ""],
  [1, "Foil_600x600_P_3339", ">", ""],
  [1, "Rider_3352", ">", ""],
  [1, "Foil_600x600_S_3343", ">", ""],
  [1, "Rudder_3347", "v", "p"],
  [2, "PointMassModel_7431_550", ">", ""],
  [2, "VlpmLoadModel_7432_552", ">", ""],
  [2, "SimpleForceModel_7449_555", "v", "p"],
  [3, "SimpleForceModel_7449_555", "v", "p"],
  [4, "app_pt", ">", ""],
  [4, "applied_force", "v", "p"],
  [5, "applied_force.x", "", "x", ["200", "120", "500"]],
  [5, "applied_force.y", "", ""],
  [5, "applied_force.z", "", ""],
  [4, "applied_torque", ">", ""],
  [1, "init_local_pos", ">", ""],
  [1, "init_local_angles", ">", ""],
  [1, "init_local_lin_vel", ">", ""],
  [1, "init_local_ang_vel", ">", ""],
];

const criteria = [["iterations", "100"], ["abs value", "0"], ["rel value", "1e-08"], ["time (s)", "0"]];

/* -------------------------------------------------------------- components */

const SideRail = () => (
  <Rail>
    <RailButton aria-label="Home"><RailLogo /></RailButton>
    <RailButton $active aria-label="Project">
      <svg width="26" height="26" viewBox="0 0 26 26" stroke="#d0d0d0" strokeWidth="2">
        <path d="M0 1H26M0 7H21M0 13H26M0 19H21M0 25H26" />
      </svg>
    </RailButton>
    <RailButton aria-label="Run">
      <svg width="22" height="28" viewBox="0 0 22 28" fill="none" stroke="#c8c8c8" strokeWidth="2.5" strokeLinejoin="round">
        <path d="M2 2L20 14L2 26Z" />
      </svg>
    </RailButton>
    <RailButton aria-label="Plots">
      <svg width="30" height="30" viewBox="0 0 30 30" fill="none">
        <path d="M3 14L10 9L14 13L21 4L27 9V27H3Z" fill="url(#gArea)" />
        <path d="M1.5 1V28.5H29" stroke="#c0c0c0" strokeWidth="2" />
        <path d="M4 25L8 17L14 24L22 14L26 25" stroke="#c8c8c8" strokeWidth="1.6" />
      </svg>
    </RailButton>
    <RailFoot>
      <RailButton aria-label="Services">
        <svg width="32" height="30" viewBox="0 0 32 30">
          <Gear r={11} cx={20} cy={11} />
          <path d="M1 23Q6 17 11 19L19 21Q21 23 18 24L11 24M18 24L28 21Q31 21 28 25Q24 29 17 29L4 28" fill="#414141" stroke="#b5b5b5" strokeWidth="1.7" />
        </svg>
      </RailButton>
      <RailButton aria-label="Account">
        <svg width="30" height="30" viewBox="0 0 30 30">
          <circle cx="15" cy="15" r="14.2" fill="none" stroke="#c0c0c0" strokeWidth="1.5" />
          <circle cx="15" cy="7.5" r="5" fill="#b5b5b5" />
          <path d="M5 24V19Q5 13 11 13H19Q25 13 25 19V24Q21 29 15 29T5 24Z" fill="#b5b5b5" />
          <path d="M9 20V28M21 20V28" stroke="#888" strokeWidth="0.8" />
        </svg>
      </RailButton>
      <RailButton aria-label="Preferences">
        <svg width="30" height="30" viewBox="0 0 30 30"><Gear /></svg>
      </RailButton>
    </RailFoot>
  </Rail>
);

const ProjectDock = () => (
  <LeftDock>
    <TabBar>
      <Tab $active $edge="right" $l={10} $r={9}>Workspace</Tab>
      <BarEnd aria-label="Dock menu"><DockChevron /></BarEnd>
    </TabBar>
    <ProjectHead>
      <ProjectTitle>PROJECT</ProjectTitle>
      <svg width="8" height="12" viewBox="0 0 8 12" fill="none" stroke="#d0d0d0" strokeWidth="1.6"><path d="M1 1L4 4L7 1M1 11L4 8L7 11" /></svg>
      <svg width="8" height="12" viewBox="0 0 8 12" fill="none" stroke="#d0d0d0" strokeWidth="1.6"><path d="M1 4.5L4 1.5L7 4.5M1 7.5L4 10.5L7 7.5" /></svg>
    </ProjectHead>
    <TreeFrame>
      <Tree>
        {tree.map(([depth, label, icon, state], i) => (
          <TreeItem key={i} $depth={depth} $bold={!icon}>
            <Twisty aria-label={`Toggle ${label}`}>{state && <Chevron open={state === "v"} />}</Twisty>
            {icon && <TreeIcon>{treeIcons[icon]}</TreeIcon>}
            <TreeText>{label}</TreeText>
          </TreeItem>
        ))}
      </Tree>
      <TreeScroll><TreeThumb /><Chevron size={8} color="#8a8a8a" /></TreeScroll>
    </TreeFrame>
    <Splitter />
    <PropDock>
      <TabBar $h={22}>
        <Tab $active $edge="right" $l={10} $r={6}>Properties<TabClose $lead={0}><Cross /></TabClose></Tab>
        <BarEnd aria-label="Dock menu"><DockChevron /></BarEnd>
      </TabBar>
      <PropForm>
        <PropBlock>
          <PropField $gap={10}>Name<TextBox defaultValue="grad_18214" /></PropField>
        </PropBlock>
        <PropBlock>
          <PropField>Parent Task<TextBox defaultValue="Speed_foilX_foilRake_4741" /></PropField>
          <PropField>Parent Process<TextBox defaultValue="Speed_foilX_foilRake_4741" /></PropField>
        </PropBlock>
        <PropBlock>
          <PropField>Entity Dependency<TextBox defaultValue="grad" /></PropField>
        </PropBlock>
      </PropForm>
    </PropDock>
  </LeftDock>
);

const FlowCanvas = () => (
  <Canvas>
    <Edges width="1896" height="724">
      {edges.map(([x1, y1, x2, y2, curved], i) => {
        const m = (y1 + y2) / 2;
        return (
          <path
            key={i}
            d={curved ? `M${x1} ${y1}C${x1} ${m} ${x2} ${m} ${x2} ${y2}` : `M${x1} ${y1}L${x2} ${y2}`}
            fill="none"
            stroke="#3f3f3f"
            strokeWidth="8"
          />
        );
      })}
    </Edges>
    {nodes.map((n, i) => (
      <NodeBox key={i} $x={n.x} $y={n.y} $w={n.w ?? 97} $h={n.h ?? 73} $on={n.on}>
        {n.label && <NodeLabel>{n.label}</NodeLabel>}
        {n.icon}
        {n.hide && <HideButton>hide</HideButton>}
      </NodeBox>
    ))}
    {edges.flatMap(([x1, y1, x2, y2], i) => [
      <Port key={`${i}a`} $x={x1} $y={y1} $on={isLit(x1, y1)} />,
      <Port key={`${i}b`} $x={x2} $y={y2} $on={isLit(x2, y2)} />,
    ])}
  </Canvas>
);

const Filter = () => (
  <FilterBox>
    <FilterIcon><FunnelGlass /></FilterIcon>
    <FilterInput placeholder="Filter by name" aria-label="Filter by name" />
  </FilterBox>
);

const VariablesDock = () => (
  <VarDock>
    <TabBar>
      <Tab $active $edge="right" $l={10}>Variables</Tab>
    </TabBar>
    <VarFilter><Filter /></VarFilter>
    <VarScroll>
      <VarPane>
        <Grid>
          <colgroup><Col $w={369} /><Col $w={100} /><Col $w={100} /><Col /><Col /><Col /><Col /><Col /></colgroup>
          <thead>
            <tr>{["Name", "Type", "Link", "Value", "Init", "Min", "Max", ""].map((h, i) => <Th key={i}>{h}</Th>)}</tr>
          </thead>
          <tbody>
            {vars.map((r, i) => {
              const bg = r.sel ? c.blue : r.bg;
              const range = r.mm ? r.bg : undefined;
              return (
                <tr key={i}>
                  <NameTd>
                    <NameCell $depth={r.d}>
                      {r.head && <Twisty $w={10} aria-label={`Toggle ${r.n}`}><Chevron /></Twisty>}
                      <NameFill $bg={bg}>{r.n}</NameFill>
                    </NameCell>
                  </NameTd>
                  <Td $bg={bg}>{r.t}</Td>
                  <Td $bg={bg}>{r.l}</Td>
                  <Td $bg={bg} $num>{r.v}</Td>
                  <Td $bg={r.head ? undefined : r.bg} $num>{r.i}</Td>
                  <Td $bg={range} />
                  <Td $bg={range} />
                  <Td $bg={r.bg} />
                </tr>
              );
            })}
          </tbody>
        </Grid>
      </VarPane>
      <VarScrollBar><Chevron size={8} color="#8a8a8a" /></VarScrollBar>
    </VarScroll>
  </VarDock>
);

const TasksPanel = () => (
  <TaskDock>
    <TabBar $end={12}>
      <Tab $active $edge="right" $l={10}>Tasks</Tab>
      <BarEnd aria-label="Dock menu"><DockChevron /></BarEnd>
    </TabBar>
    <TaskTitle>vpp</TaskTitle>
    <TaskList>
      {[
        { n: "Pre-Process", icon: <Wedge w={14} h={12} /> },
        { n: "Speed_foilX_foilRake_4741", icon: <Cube w={15} h={15} />, kids: true },
        { n: "Post-Process", icon: <Wedge w={14} h={12} warm /> },
      ].map((t) => (
        <TaskItem key={t.n}>
          <Twisty $w={10} aria-label={`Toggle ${t.n}`}>{t.kids && <Chevron open={false} />}</Twisty>
          <TaskIcon>{t.icon}</TaskIcon>
          <TaskName>{t.n}</TaskName>
          <HelpDot>?</HelpDot>
        </TaskItem>
      ))}
    </TaskList>
    <TaskActions>
      <ActionButton>INITIALIZE</ActionButton>
      <ActionButton disabled>RUN</ActionButton>
    </TaskActions>
  </TaskDock>
);

const PropertiesDialog = () => (
  <Dialog role="dialog" aria-label="Properties">
    <DialogBar>
      <Logo w={10} h={12} />
      <DialogTitle>Properties</DialogTitle>
      <DialogClose aria-label="Close"><Cross size={13} color="#d8d8d8" /></DialogClose>
    </DialogBar>
    <DialogBody>
      <Settings>
        <GroupTitle $h={20}>Settings</GroupTitle>
        <SettingsFrame>
          <GroupTitle $h={21}>Algorithm</GroupTitle>
          <AlgoSelect aria-label="Algorithm" defaultValue="SLSQP"><option>SLSQP</option></AlgoSelect>
          <GroupTitle $h={24}>Options</GroupTitle>
          <Group>
            <FieldRow>Verbosity<TextBox $w={25} defaultValue="10" /></FieldRow>
            <CheckRow><Check defaultChecked />Adimensionalize</CheckRow>
            <CheckRow><Check />high order gradient</CheckRow>
          </Group>
          <GroupTitle $h={24}>Stopping Criteria</GroupTitle>
          <Group $pad="9px" $gap={6}>
            {criteria.map(([k, val]) => (
              <FieldRow key={k}>{k}<TextBox $w={50} defaultValue={val} /></FieldRow>
            ))}
          </Group>
        </SettingsFrame>
      </Settings>
      <Splitter $size={4} />
      <DialogMain>
        <DialogTabs>
          <DialogTab $active>Optimization Variables</DialogTab>
          <DialogTab>Objective</DialogTab>
          <DialogTab>Equality Constraints</DialogTab>
          <DialogTab>Inequality Constraints</DialogTab>
        </DialogTabs>
        <DialogFilter>
          <Filter />
          <TagBox>
            <TagSelect aria-label="Tags" defaultValue="TAGS"><option>TAGS</option></TagSelect>
            <TagArrow><Chevron size={9} color="#8a8a8a" /></TagArrow>
          </TagBox>
          <CheckRow>Selected<Check /></CheckRow>
        </DialogFilter>
        <VarTree>
          <Grid>
            <colgroup><Col $w={238} /><Col /><Col /><Col /></colgroup>
            <thead>
              <tr>{["Name", "Init", "Min", "Max"].map((h) => <Th key={h}>{h}</Th>)}</tr>
            </thead>
            <tbody>
              {optVars.map(([depth, name, twisty, check, vals], i) => (
                <tr key={i}>
                  <NameTd>
                    <CheckCell $depth={depth}>
                      <Twisty $w={11} aria-label={`Toggle ${name}`}>{twisty && <Chevron open={twisty === "v"} />}</Twisty>
                      <Check id={`opt-${i}`} defaultChecked={check !== ""} $partial={check === "p"} />
                      <CheckName htmlFor={`opt-${i}`}>{name}</CheckName>
                    </CheckCell>
                  </NameTd>
                  {[0, 1, 2].map((k) => <Td key={k} $num>{vals?.[k]}</Td>)}
                </tr>
              ))}
            </tbody>
          </Grid>
        </VarTree>
      </DialogMain>
    </DialogBody>
  </Dialog>
);

export default function App() {
  return (
    <Shell>
      <GlobalStyle />
      <Defs />
      <TitleBar>
        <Logo w={11} h={13} />
        <Menu>{["File", "View", "Tools", "User", "Help"].map((m) => <button key={m}>{m}</button>)}</Menu>
        <WindowButtons>
          <button aria-label="Minimise"><svg width="12" height="12" viewBox="0 0 12 12" stroke="#d8d8d8"><path d="M0 6.5H12" /></svg></button>
          <button aria-label="Restore"><svg width="12" height="12" viewBox="0 0 12 12" fill="none" stroke="#d8d8d8"><path d="M.5 3.5H8.5V11.5H.5ZM3 3V.5H11.5V9H9" /></svg></button>
          <button aria-label="Close"><Cross size={11} color="#d8d8d8" /></button>
        </WindowButtons>
      </TitleBar>
      <Workbench>
        <SideRail />
        <Stage>
          <ToolBar>
            {toolGroups.map((g) => (
              <ToolGroup key={g.name}>
                <ToolRow>{g.tools.map((t) => <ToolButton key={t} aria-label={`${g.name} ${t}`}>{toolIcons[t]}</ToolButton>)}</ToolRow>
                <ToolLabel>{g.name}</ToolLabel>
              </ToolGroup>
            ))}
          </ToolBar>
          <Docks>
            <ProjectDock />
            <EndSplitter $size={4} />
            <CenterDock>
              <TabBar $h={22}>
                <Tab $edge="right"><Logo w={13} h={16} />Home</Tab>
                <Tab $active $r={7}><FlowIcon w={14} />vpp<TabClose><Cross /></TabClose></Tab>
                <Tab $edge="both" $r={6}><FlowIcon w={14} />TurnRudCurve_NoJP<TabClose><Cross /></TabClose></Tab>
                <BarEnd aria-label="Dock menu"><DockChevron /></BarEnd>
              </TabBar>
              <WorkArea>
                <FlowColumn>
                  <TabBar>
                    <Tab $active $l={10}>Workflow</Tab>
                    <Tab $edge="both">Full_Board_Rider_Free_499</Tab>
                    <BarEnd aria-label="Dock menu"><DockChevron /></BarEnd>
                  </TabBar>
                  <FlowCanvas />
                  <Splitter />
                  <VariablesDock />
                </FlowColumn>
                <Splitter $size={3} />
                <TasksPanel />
              </WorkArea>
            </CenterDock>
            <EndSplitter $size={4} />
          </Docks>
        </Stage>
      </Workbench>
      <PropertiesDialog />
    </Shell>
  );
}
